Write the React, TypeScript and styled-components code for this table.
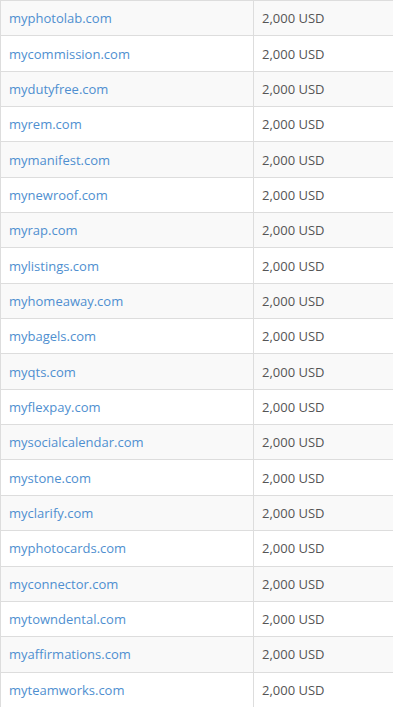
import React from "react";
import styled, { createGlobalStyle } from "styled-components";

const GlobalStyle = createGlobalStyle`
  html, body {
    margin: 0;
    padding: 0;
    background: #ffffff;
  }
  body {
    font-family: "Open Sans", "Liberation Sans", sans-serif;
    overflow: hidden;
  }
`;

const Table = styled.div`
  width: 100%;
  border-left: 1px solid #dddddd;
  border-top: 1px solid #dddddd;
  box-sizing: border-box;
`;

const Row = styled.div<{ $striped: boolean }>`
  display: grid;
  grid-template-columns: 252px 1fr;
  height: 35.35px;
  box-sizing: border-box;
  border-bottom: 1px solid #dddddd;
  background: ${(props) => (props.$striped ? "#f9f9f9" : "#ffffff")};
`;

const Cell = styled.div`
  display: flex;
  align-items: center;
  padding: 0 8px;
  font-size: 13px;
  color: #555555;
  white-space: nowrap;

  & + & {
    border-left: 1px solid #dddddd;
  }
`;

const DomainLink = styled.a`
  color: #4f8fd0;
  text-decoration: none;
`;

const domains = [
  "myphotolab.com",
  "mycommission.com",
  "mydutyfree.com",
  "myrem.com",
  "mymanifest.com",
  "mynewroof.com",
  "myrap.com",
  "mylistings.com",
  "myhomeaway.com",
  "mybagels.com",
  "myqts.com",
  "myflexpay.com",
  "mysocialcalendar.com",
  "mystone.com",
  "myclarify.com",
  "myphotocards.com",
  "myconnector.com",
  "mytowndental.com",
  "myaffirmations.com",
  "myteamworks.com",
];

const App = () => {
  return (
    <>
      <GlobalStyle />
      <Table>
        {domains.map((domain, i) => (
          <Row key={domain} $striped={i % 2 === 0}>
            <Cell>
              <DomainLink href="#">{domain}</DomainLink>
            </Cell>
            <Cell>2,000 USD</Cell>
          </Row>
        ))}
      </Table>
    </>
  );
};

export default App;
